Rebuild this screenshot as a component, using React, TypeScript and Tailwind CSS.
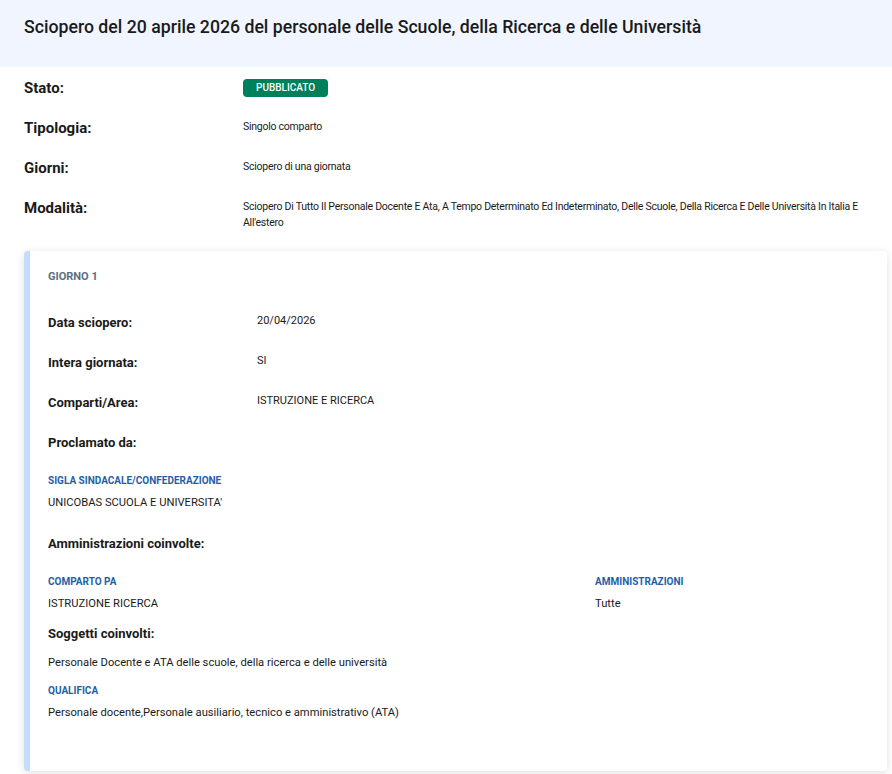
const font = { fontFamily: "Roboto, 'Noto Sans', sans-serif" };

function TopRow({ label, children }: { label: string; children: React.ReactNode }) {
  return (
    <div className="flex items-start">
      <div className="w-[219px] shrink-0 text-[15px] font-bold leading-5 text-[#1a1a1a]">{label}</div>
      <div className="flex-1 text-[10.5px] leading-4 tracking-[-0.25px] text-[#1a1a1a] pt-[1px]">{children}</div>
    </div>
  );
}

function CardRow({ label, value }: { label: string; value?: string }) {
  return (
    <div className="flex items-start">
      <div className="w-[209px] shrink-0 text-[13px] font-bold leading-5 text-[#1a1a1a]">{label}</div>
      <div className="flex-1 text-[11px] leading-4 text-[#1a1a1a]">{value}</div>
    </div>
  );
}

function Field({ title, value }: { title: string; value: string }) {
  return (
    <div className="flex flex-col gap-[6px]">
      <div className="text-[10px] font-bold uppercase leading-4 text-[#1f5fa8]">{title}</div>
      <div className="text-[11.2px] leading-4 text-[#1a1a1a]">{value}</div>
    </div>
  );
}

export default function App() {
  return (
    <div className="min-h-[774px] bg-white" style={font}>
      <div className="h-[67px] bg-[#f0f5ff] px-6 pt-[15px]">
        <h1 className="text-[17.7px] font-medium leading-6 text-[#1a1a1a]">
          Sciopero del 20 aprile 2026 del personale delle Scuole, della Ricerca e delle Università
        </h1>
      </div>

      <div className="flex flex-col gap-5 px-6 pt-[11px]">
        <TopRow label="Stato:">
          <span className="inline-block rounded bg-[#00805a] px-[13px] py-[1px] text-[10px] font-medium uppercase leading-4 tracking-normal text-white">
            Pubblicato
          </span>
        </TopRow>
        <TopRow label="Tipologia:">Singolo comparto</TopRow>
        <TopRow label="Giorni:">Sciopero di una giornata</TopRow>
        <TopRow label="Modalità:">
          Sciopero Di Tutto Il Personale Docente E Ata, A Tempo Determinato Ed Indeterminato, Delle Scuole, Della Ricerca E Delle Università In Italia E All'estero
        </TopRow>
      </div>

      <div className="ml-6 mr-[5px] mt-[20px] rounded border-l-[6px] border-[#c2ddfd] bg-white pb-[50px] pl-[18px] pr-6 pt-[18px] shadow-[0_2px_10px_rgba(0,0,0,0.12)]">
        <div className="text-[11px] font-bold uppercase leading-4 text-[#5c6f82]">Giorno 1</div>
        <div className="mt-[28px] flex flex-col gap-5">
          <CardRow label="Data sciopero:" value="20/04/2026" />
          <CardRow label="Intera giornata:" value="SI" />
          <CardRow label="Comparti/Area:" value="ISTRUZIONE E RICERCA" />
          <CardRow label="Proclamato da:" />
        </div>
        <div className="mt-[20px]">
          <Field title="Sigla sindacale/confederazione" value="UNICOBAS SCUOLA E UNIVERSITA'" />
        </div>
        <div className="mt-[23px] text-[13px] font-bold leading-5 text-[#1a1a1a]">Amministrazioni coinvolte:</div>
        <div className="mt-[20px] grid grid-cols-[547px_1fr]">
          <Field title="Comparto PA" value="ISTRUZIONE RICERCA" />
          <Field title="Amministrazioni" value="Tutte" />
        </div>
        <div className="mt-[12px] text-[13px] font-bold leading-5 text-[#1a1a1a]">Soggetti coinvolti:</div>
        <div className="mt-[11px] text-[11.2px] leading-4 text-[#1a1a1a]">
          Personale Docente e ATA delle scuole, della ricerca e delle università
        </div>
        <div className="mt-[12px]">
          <Field title="Qualifica" value="Personale docente,Personale ausiliario, tecnico e amministrativo (ATA)" />
        </div>
      </div>
    </div>
  );
}
